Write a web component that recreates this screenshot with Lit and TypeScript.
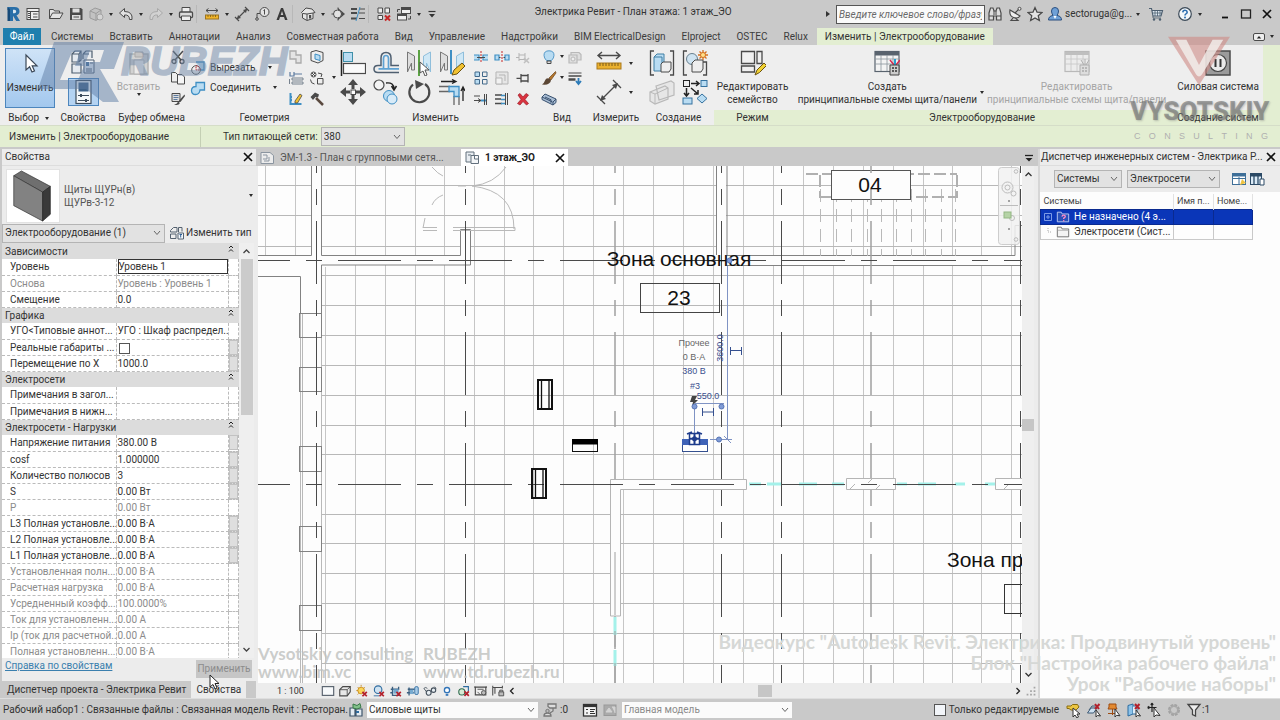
import { LitElement, html, svg, css, nothing, type TemplateResult } from "lit";
import { customElement } from "lit/decorators.js";
import { classMap } from "lit/directives/class-map.js";

/* ---------- icon set: small glyphs on a 16 grid, large ones on a 26 grid ---------- */

const K = "#4a4a4a";
const B = "#3f8fc4";
const L = "#b9dcf2";

const small: Record<string, TemplateResult> = {
  revit: svg`<path d="M2.500 1h7q5 0 5 4.300 0 3-3 4l3.500 5.700h-3.800l-3.200-5.300v5.300H4.500V4H2.500z" fill="#2a6fa8"/><path d="M8 3.700v3.600h1.500q1.700 0 1.700-1.800T9.500 3.700z" fill="#d8e6f0"/><path d="M2.500 1L5 3v12H2.500z" fill="#174a78"/>`,
  home: svg`<rect x="2" y="2.500" width="12" height="11" fill="#eee" stroke="${K}"/><path d="M2 5.500h12M5.500 5.500v8M8 8h4.500M8 11h4.500" stroke="${K}" fill="none"/><path d="M3 7.500h2M3 9.500h2M3 11.500h2" stroke="${K}"/>`,
  open: svg`<path d="M1.500 12.500v-9h4l1 1.500h5v2M1.500 12.500l3-5.500h10.500l-3 5.500z" fill="#e4e4e4" stroke="${K}"/>`,
  save: svg`<path d="M2 2h11l1.500 1.500V14H2z" fill="${K}"/><path d="M4.500 2.500h7v4h-7z" fill="#ddd"/><path d="M4 9h8.500v4.500H4z" fill="#ddd"/><path d="M5.500 11h5.500" stroke="${K}"/>`,
  sync: svg`<path d="M2 5l5-3 6 2v7l-5 3.500-6-2.500z" fill="#c2c2c2" stroke="#9b9b9b"/><path d="M2 5l6 2.500 5-3.500M8 7.500V14" stroke="#9b9b9b" fill="none"/><circle cx="12" cy="11" r="3" fill="#d5d5d5" stroke="#a5a5a5"/>`,
  undo: svg`<path d="M6.500 2.500L1.500 7l5 4.500V9q5-.5 5 4.500h2.500Q15 5.500 6.500 5.500z" fill="#e2e2e2" stroke="${K}"/>`,
  redo: svg`<path d="M9.500 2.500l5 4.500-5 4.500V9q-5-.5-5 4.500H2Q1 5.500 9.500 5.500z" fill="#d2d2d2" stroke="#a9a9a9"/>`,
  print: svg`<path d="M4 6V1.500h8V6" fill="#eee" stroke="${K}"/><rect x="1.500" y="6" width="13" height="5.500" rx="1" fill="#dcdcdc" stroke="${K}" stroke-width="1.300"/><path d="M3.500 10h9v4.500h-9z" fill="#eee" stroke="${K}"/>`,
  measureH: svg`<path d="M2 4.500h12M4.500 2.500L2 4.500l2.500 2M11.500 2.500l2.500 2-2.500 2" stroke="${K}" fill="none"/><rect x="1.500" y="9" width="13" height="4" fill="#f0b429" stroke="#9c7420"/><path d="M4 9v2M6.500 9v2M9 9v2M11.500 9v2" stroke="#7a5a14" stroke-width=".8"/>`,
  dim: svg`<path d="M3 13L13 3M1 11l4 4M11 1l4 4" stroke="${K}" fill="none" stroke-width="1.200"/><path d="M3 13l1-4 3 3zM13 3l-1 4-3-3z" fill="${K}"/>`,
  tag: svg`<circle cx="10.500" cy="6" r="4.500" fill="#e4e4e4" stroke="${K}"/><path d="M9.500 4.500l1-1V8.500M3 12V7.500h3" stroke="${K}" fill="none"/><circle cx="3" cy="13" r="1.300" fill="none" stroke="${K}"/>`,
  letterA: svg`<path d="M2.500 14L7 2h2l4.500 12h-2.500l-1-3H6l-1 3zM6.700 9h2.600L8 5z" fill="#3a3a3a" fill-rule="evenodd"/>`,
  house3d: svg`<path d="M1.500 6.500L6 2l6 1 3 3.500-2 .5v5.500l-6 2-4.500-2.500V7.500z" fill="#e6e6e6" stroke="${K}"/><path d="M7 8v6M3 7.500L7 8l6-1" stroke="${K}" fill="none"/><rect x="9" y="9" width="2.200" height="3.500" fill="${K}"/>`,
  section: svg`<path d="M8 1.500V3M8 13v1.500M1.500 8H4" stroke="${K}"/><path d="M8 2l7 6-7 6z" fill="${K}"/><circle cx="7.500" cy="8" r="4" fill="#e2e2e2" stroke="${K}"/>`,
  thin: svg`<path d="M1 3h6M1 7h6M1 12.500h6" stroke="${K}" stroke-width="2"/><path d="M9 3h6M9 7h6M9 12.500h6" stroke="${K}"/><path d="M10 1L6 15" stroke="${B}"/>`,
  closeHidden: svg`<path d="M2 2h4.500v5H2zM9 2h4.500v5H9zM2 9.500h4.500v4H2z" fill="#eee" stroke="${K}"/><path d="M9 9.500l5 5M14 9.500l-5 5" stroke="#c62828" stroke-width="2"/>`,
  switchWin: svg`<rect x="5.500" y="1.500" width="9" height="6" fill="#eee" stroke="${K}"/><path d="M5 3h10" stroke="${K}" stroke-width="2"/><rect x="1.500" y="8" width="9" height="6" fill="#eee" stroke="${K}"/><path d="M1 9h10" stroke="${K}" stroke-width="2"/><path d="M1.500 6V3.500H4M14.500 10v3H12" stroke="${K}" fill="none"/>`,
  customize: svg`<path d="M4.500 5.500h7" stroke="#333" stroke-width="1.200"/><path d="M5 8h6l-3 3.500z" fill="#333"/>`,
  binoc: svg`<path d="M2 7l1.500-5h2.500l1 3h2l1-3h2.500L14 7v7H9.500v-4h-3v4H2z" fill="#dedede" stroke="${K}" stroke-width="1.200"/><path d="M2 10h4.500M9.500 10H14M7 5v4M9 5v4" stroke="${K}"/>`,
  dish: svg`<path d="M3 4q-1 6 3.500 7.500T13 10z" fill="#eee" stroke="${K}" stroke-width="1.200"/><path d="M8 7l4-4M6 12l-2 2.500h7L8.500 12" stroke="${K}" fill="none" stroke-width="1.200"/><circle cx="12.500" cy="2.800" r="1.500" fill="#eee" stroke="${K}"/>`,
  star: svg`<path d="M8 1.500l2 4.600 5 .4-3.800 3.200 1.200 4.800L8 12l-4.400 2.500 1.200-4.800L1 6.500l5-.4z" fill="#e4e4e4" stroke="${K}" stroke-width="1.200"/>`,
  person: svg`<path d="M1.500 14q0-4 4.500-4.500Q4.500 7 4.500 5 4.500 1.500 8 1.500T11.500 5q0 2-1.500 4.500 4.500.5 4.500 4.500z" fill="#6fa0d6" stroke="#2b4f80"/><path d="M6.500 10L8 13l1.500-3" fill="#fff"/>`,
  cart: svg`<path d="M1 2.500h2.500L5 10h8l1.500-5.500H4.500" fill="#dfe9f2" stroke="#4d5f70" stroke-width="1.200"/><path d="M5 10v2h8M7 5v5M9.500 5v5M12 5v5M4.500 7h9" stroke="#4d5f70" fill="none" stroke-width=".8"/><circle cx="6" cy="13.500" r="1.200" fill="#4d5f70"/><circle cx="12" cy="13.500" r="1.200" fill="#4d5f70"/>`,
  help: svg`<circle cx="8" cy="8" r="6.300" fill="#f3f7fa" stroke="#3c4a58" stroke-width="1.200"/><path d="M5.800 6.300Q6 4.300 8 4.300t2.200 1.800q0 1.200-1.200 1.800-1 .5-1 1.600" fill="none" stroke="#2f6fb0" stroke-width="1.600"/><circle cx="8" cy="11.500" r="1" fill="#2f6fb0"/>`,
  min: svg`<path d="M5 11.500h6" stroke="#111" stroke-width="1.800"/>`,
  max: svg`<rect x="3.500" y="4" width="9" height="8" fill="none" stroke="#222" stroke-width="1.300"/>`,
  close: svg`<path d="M4 4l8 8M12 4l-8 8" stroke="#111" stroke-width="1.700"/>`,
  panelToggle: svg`<rect x="2.500" y="4.500" width="11" height="7" rx="1.500" fill="#eee" stroke="${K}"/><path d="M5.800 9.500L8 7l2.200 2.500z" fill="#222"/>`,
  cut: svg`<path d="M3 2l8 9M13 2L5 11" stroke="${K}" stroke-width="1.500"/><circle cx="4" cy="12.500" r="2" fill="none" stroke="${K}" stroke-width="1.300"/><circle cx="12" cy="12.500" r="2" fill="none" stroke="${K}" stroke-width="1.300"/>`,
  copy: svg`<path d="M1.500 2.500h4L8 5v7H1.500z" fill="#eee" stroke="${K}"/><path d="M7.500 4.500H12l2.500 2.500v7h-7z" fill="#f6f6f6" stroke="${K}"/>`,
  match: svg`<path d="M2 2.500h8v8H2z" fill="#ddd" stroke="${K}"/><path d="M3.500 4.500h5M3.500 6.500h5M3.500 8.500h4" stroke="#5c7ba0"/><path d="M14.500 3.500L9 9.500l1.500 1.500 4.500-6z" fill="${K}"/><path d="M4 13.500q3 0 4-3l2 1.500q-1.500 3-6 1.500z" fill="${K}"/>`,
  geoCut: svg`<path d="M6 2h8v8H9" fill="${L}" stroke="${B}" stroke-width="1.300"/><circle cx="6" cy="10" r="4.300" fill="#eee" stroke="#555"/><path d="M6 5.700A4.300 4.300 0 0 1 10.300 10H6z" fill="none" stroke="#c62828" stroke-dasharray="1.500 1"/>`,
  geoJoin: svg`<path d="M6 2.500h8.500V10H10q-.5 4.500-4.500 4.500-4 0-4-4t4.500-4z" fill="${L}" stroke="${B}" stroke-width="1.300"/>`,
  cope: svg`<path d="M2 2h6v4h5v8H8v-4H2z" fill="#e4e4e4" stroke="#a9a9a9" stroke-width="1.300"/>`,
  notch: svg`<path d="M2 2v4h4V2M9 4h5M6 4h3" stroke="#5c7ba0" fill="none" stroke-width="1.200"/><path d="M4 8h11v2H4zM4 12h11v2H4zM1.500 9v5" stroke="#77828e" fill="none"/>`,
  paintEdge: svg`<path d="M2.500 2v11h11M2 6h2M2 9h2" stroke="${B}" fill="none" stroke-width="2"/><path d="M7 10l5-7 2 1.500L9.500 12H7z" fill="#f0c030" stroke="${K}" stroke-width=".8"/>`,
  split: svg`<path d="M2 3l5-1.500 7 2v8L9 14l-7-2.500z" fill="#eee" stroke="${K}"/><path d="M6 5l5 1.500v5L6 10z" fill="${L}" stroke="${B}"/>`,
  wallJoin: svg`<circle cx="4.500" cy="4.500" r="2.500" fill="#eee" stroke="${K}"/><path d="M3 3l3 3M6 3L3 6M9 3l4 1-1 3" fill="none" stroke="${K}"/><path d="M8.500 8.500H14V14H8.500zM1.500 9.500q0 4 4 4.500" fill="#eee" stroke="${K}"/>`,
  hammer: svg`<path d="M1.500 6L6 1.500l4 2-1 3-2.500-.5L4 9z" fill="${K}"/><path d="M7 7l7 7" stroke="#5a4a40" stroke-width="2.500"/>`,
  splitEl: svg`<path d="M1 6h5v5H1M15 6h-5v5h5" fill="${L}" stroke="${B}" stroke-width="1.200"/><path d="M8 2v12" stroke="#c62828" stroke-dasharray="2 1"/><path d="M4 8.500h8" stroke="${K}"/>`,
  splitGap: svg`<path d="M1 6h4v5H1zM11 6h4v5h-4z" fill="${L}" stroke="${B}" stroke-width="1.200"/><path d="M8 2v12" stroke="#c62828" stroke-dasharray="2 1"/><path d="M5 8.500h1.500M9.500 8.500H11" stroke="${K}"/>`,
  unpin: svg`<path d="M4 4v8M4 6h6M4 10.500h6M10 4v8M1 8.500h3" fill="none" stroke="#b5b5b5"/><path d="M9 9l5 5M14 9l-5 5" stroke="#c0c0c0" stroke-width="1.500"/>`,
  array: svg`<path d="M2 2h4.500v4.500H2zM2 9.500h4.500V14H2z" fill="${L}" stroke="#41688a"/><path d="M9.500 2H14v4.500H9.500zM9.500 9.500H14V14H9.500z" fill="#eee" stroke="#41688a"/>`,
  scale: svg`<path d="M2 2h12v12H2z" fill="#e6e6e6" stroke="#b5b5b5"/><path d="M2 8h6v6H2z" fill="#f2f2f2" stroke="#b5b5b5"/><path d="M5 5h6v6" stroke="#b5b5b5" fill="none"/>`,
  pin: svg`<path d="M6 4v8.500M6 5.500h7M6 11h7M13 4v8.500M1.500 8.300H6" fill="none" stroke="${K}" stroke-width="1.300"/>`,
  trimOne: svg`<path d="M1 5h6M1 9.500h7M5 7.500l3 2-3 2" stroke="${K}" fill="none"/><path d="M8 9.500h5" stroke="${B}" stroke-width="2"/><path d="M11.500 3v11M13.500 3v11" stroke="${K}"/>`,
  trimMulti: svg`<path d="M1 4h7M1 8h6M1 12.500h7" stroke="${K}" stroke-width="1.400"/><path d="M7 4.500h5M7 8.500h5M7 12.500h5" stroke="${B}" stroke-width="1.500"/><path d="M11.500 2v12M13.500 2v12" stroke="${K}"/>`,
  del: svg`<path d="M3 4l2-1.500L8 6l3-3.500L13.500 4 10 8.500l3.500 4L11.500 14 8 10.500 5 14l-2.500-1.500L6 8.500z" fill="#d9333f" stroke="#9d1c28" stroke-width=".7"/>`,
  bulb: svg`<path d="M5.500 11.500Q3 9 3 6.300 3 1.800 8 1.800t5 4.500q0 2.700-2.500 5.200z" fill="${L}" stroke="#5599c8"/><path d="M6 12h4v2.500H6z" fill="#ddd" stroke="${K}"/>`,
  paint: svg`<path d="M14.500 1.500L8 8l2 2 5-7z" fill="#b5762c" stroke="#6d451b" stroke-width=".7"/><path d="M1 14.500q2-1 3-4T8.500 8.500L10 10.500q-1 5-9 4z" fill="#5b4634"/>`,
  chain: svg`<path d="M1 6l3-3 11 5v3.500l-3 2.500L1 8.500z" fill="#a9bdd4" stroke="#38506e"/><path d="M4 6l6 2.800v3M1 6l10.500 5M12 14v-3l3-3" stroke="#38506e" fill="none"/>`,
  ghostBox: svg`<path d="M2 6h8v8H2zM4 6V3.500h8l2 2V11h-4" fill="#dedede" stroke="#b9b9b9" stroke-width="1.200"/><circle cx="6" cy="10" r="2" fill="#eee" stroke="#b9b9b9"/>`,
  lineStyle: svg`<path d="M1.500 3h13" stroke="${K}"/><path d="M1.500 6h13" stroke="${K}" stroke-width="1.500"/><path d="M1.500 9.500h7" stroke="${K}" stroke-width="2.500"/><path d="M11.500 8v5M9 11l2.500 3L14 11" stroke="#2d7bb8" stroke-width="1.800" fill="none"/>`,
  typeEdit: svg`<path d="M4.500 2.500H8v4.500H1.500V5.500l3-3M9.500 2.500H13v4M9.500 2.500V7M1.500 9H7v4.500H1.500z" fill="#eee" stroke="#556270"/><path d="M9 8h5.500v6H9z" fill="#f5f8fb" stroke="#556270"/><path d="M10.500 9.500h2.500M11.700 9.500v3" stroke="#2f5f95"/>`,
  sheet: svg`<path d="M2 2.500h9l3.500 3V13.500H2z" fill="#ececec" stroke="#8b95a0"/><path d="M4 5h4v4H4M10 7v4H5" fill="none" stroke="#8b95a0"/>`,
  plan: svg`<path d="M2 2h8v10H2z" fill="#e8edf2" stroke="#63707d"/><path d="M7 5.500h7.500v8H7zM4 5h3M10.500 5.500V9H14" fill="#f4f6f8" stroke="#63707d"/>`,
  folder: svg`<path d="M1.500 13.500v-11h4.500l1 2h7.500v9z" fill="#f4f4f4" stroke="#666"/><path d="M2 6h12.500" stroke="#aaa"/>`,
  folderQ: svg`<path d="M1.500 13.500v-11h4.500l1 2h7.500v9z" fill="#2a50b8" stroke="#c7d4f5"/><path d="M6.800 7.500q.3-1.700 2-1.700t1.800 1.500q0 1-1.800 2v1" stroke="#ff8ac6" fill="none" stroke-width="1.500"/><circle cx="8.800" cy="12.300" r=".9" fill="#ff8ac6"/>`,
  colFit: svg`<rect x="1.500" y="2.500" width="13" height="11" fill="#fff" stroke="#3e6f98"/><path d="M2 4h12" stroke="#3e6f98" stroke-width="3"/><path d="M2 7.500h12M8 6v8" stroke="#3e6f98"/><path d="M9 14l2-6 4 4z" fill="#efc341"/>`,
  cols: svg`<rect x="1.500" y="2.500" width="11" height="11" fill="#dcecf8" stroke="#2c4a66"/><path d="M2 4h11" stroke="#2c4a66" stroke-width="3"/><path d="M5 3v11M9 3v11" stroke="#2c4a66" stroke-width="1.300"/><path d="M11 8h4v6h-4z" fill="#fff" stroke="#2c4a66"/>`,
  detail: svg`<rect x="1.500" y="3" width="13" height="10" fill="#f7f9fb" stroke="#555f6b" stroke-width="1.300"/>`,
  style: svg`<path d="M2 6.500L5.500 3H14v6l-3.500 4.500H2z" fill="#e8e8e8" stroke="${K}" stroke-width="1.300"/><path d="M2 6.500h8.500v7M10.500 6.500L14 3" fill="none" stroke="${K}"/>`,
  sun: svg`<circle cx="7" cy="7.500" r="3.800" fill="#fbd65a" stroke="#c98a1b"/><path d="M7 1v2M1.500 7.500h2M3 3.500l1.300 1.300M3 12l1.300-1.300M11 3.500L10 5" stroke="#c98a1b"/><path d="M8.500 9l5 5M13.500 9l-5 5" stroke="#b3202c" stroke-width="2"/>`,
  shadow: svg`<circle cx="7" cy="6.500" r="4.300" fill="#cfe3f2" stroke="#2f6ca0" stroke-width="1.300"/><path d="M2 13.500h6" stroke="#2f6ca0"/><path d="M8.500 9l5 5M13.500 9l-5 5" stroke="#b3202c" stroke-width="2"/>`,
  crop: svg`<path d="M2 6h9V3M4 3v10h8M1.500 10h3" stroke="#3b5f80" fill="none" stroke-width="1.500"/><rect x="5" y="6" width="6" height="5" fill="#76aad0"/><path d="M8.500 9l5 5M13.500 9l-5 5" stroke="#b3202c" stroke-width="2"/>`,
  cropShow: svg`<path d="M2 6h8M3.500 4v9M1 10h8" stroke="#3b5f80" fill="none" stroke-width="1.500"/><rect x="4.500" y="6.500" width="4" height="5" fill="#76aad0"/><rect x="10" y="3" width="4" height="9" rx="1.500" fill="#a9cde8" stroke="#2f6ca0"/>`,
  glasses: svg`<path d="M1 5q2-2 4 0M13 3l2 2" stroke="#46525e" fill="none"/><circle cx="6.500" cy="10" r="2.800" fill="#e8eef3" stroke="#46525e" stroke-width="1.300"/><circle cx="12" cy="7" r="2.500" fill="#e8eef3" stroke="#46525e" stroke-width="1.300"/><path d="M1 5l3 4" stroke="#46525e"/>`,
  reveal: svg`<circle cx="8" cy="7" r="3" fill="#fff" stroke="#3274b8" stroke-width="1.500"/><path d="M6.500 11.500h3v2h-3z" fill="#3274b8"/>`,
  temp: svg`<circle cx="5.500" cy="9" r="3.500" fill="#d6ead5" stroke="#2d6a4d" stroke-width="1.200"/><path d="M7 3h6v5" fill="none" stroke="#2d6ca0" stroke-width="1.300"/><path d="M8.500 8.500l5 5M13.500 8.500l-5 5" stroke="#b3202c" stroke-width="2"/>`,
  analyt: svg`<path d="M1.500 3.500h12v9h-12zM1 2.500v2M14 2.500v2" fill="#eee" stroke="${K}" stroke-width="1.300"/><path d="M4 6h7M4 9l3 3" stroke="${K}"/><circle cx="11" cy="10" r="2.500" fill="#bbb" stroke="${K}"/>`,
  lockDim: svg`<path d="M2 2v11M2 4h11M13 2v3M4.500 4v7" fill="none" stroke="${K}" stroke-width="1.200"/><path d="M9 9h5.500v4.500H9zM10 9V7h3.500v2" fill="#bbb" stroke="${K}"/>`,
  worksets: svg`<path d="M2 6h5v8H2zM8 7h6v7H8z" fill="#e4ebf1" stroke="#3e556b" stroke-width="1.200"/><path d="M5 2l4 1.500 3-2 1 4-4 1.500-4-1z" fill="#82c08a" stroke="#3a7a48"/><path d="M8 10h3" stroke="#2f6ca0" stroke-width="2"/>`,
  editReq: svg`<path d="M6 2h8v4H8L6 4.500zM11 6v3l-3 2M2 14q0-3 3.500-3T9 14z" fill="#ddd" stroke="#777" stroke-width="1.300"/><circle cx="5.500" cy="9" r="1.700" fill="#bbb" stroke="#777"/>`,
  listWin: svg`<rect x="1.500" y="2.500" width="13" height="11.500" fill="#f4f4f4" stroke="#333" stroke-width="1.300"/><path d="M1.500 4h13" stroke="#333" stroke-width="2.200"/><path d="M4 7.500h2M4 11h2M8 7.500h5M8 9.500h4M8 11.500h5" stroke="#333"/>`,
  ghostWin: svg`<rect x="2" y="3" width="12" height="10.500" fill="#aaa" stroke="#999"/><path d="M4 10l3-4 3 4zM10 5h3v6" fill="#d3d3d3" stroke="#d3d3d3"/>`,
  selLink: svg`<path d="M1 4h4l1.500-1.500h5L13 5l-3 3H5L3 6.500H1z" fill="#ebc541" stroke="#8a6d11"/><path d="M7 6v9l2-2 2 3 1.500-1L11 12h3z" fill="#fff" stroke="#333"/>`,
  selUnder: svg`<path d="M1.500 11L5 6h6l-3.500 5z" fill="#cfe2f1" stroke="#3c5a76"/><path d="M3 8l3-4h5" fill="none" stroke="#3c5a76"/><path d="M9 2l4 5M13.500 2L9 7" stroke="#b3202c" stroke-width="2"/><path d="M10 8v7l1.500-1.500 3 .5z" fill="#fff" stroke="#333"/>`,
  selPin: svg`<path d="M3 2h7v3l1 2H2l1-2zM6.500 7v6M2 11.500h8" fill="#e38a31" stroke="#9d4c13"/><path d="M9 7v8l1.700-1.700 3.300.5z" fill="#fff" stroke="#333"/>`,
  selFace: svg`<path d="M2 3.500L7 2v10l-5 2z" fill="#8cc3ea" stroke="#2d6ca0"/><path d="M7 4h4v8H7" fill="#e0eef8" stroke="#2d6ca0"/><path d="M9 2l4.500 5M13.500 2L9 7" stroke="#b3202c" stroke-width="2"/><path d="M10 8v7l1.500-1.500 3 .5z" fill="#fff" stroke="#333"/>`,
  selDrag: svg`<path d="M6 1v9M1.500 5.500h9M6 1L4.800 2.800M6 1l1.200 1.800M1.500 5.500l1.800-1.200M1.500 5.500l1.800 1.200" stroke="#222" fill="none" stroke-width="1.200"/><path d="M8 6v9l2-2 4 .5z" fill="#fff" stroke="#333"/>`,
  gear: svg`<circle cx="8" cy="8" r="4.500" fill="none" stroke="#a2a2a2" stroke-width="3" stroke-dasharray="2.500 1"/><circle cx="8" cy="8" r="4" fill="none" stroke="#a8a8a8" stroke-width="1.500"/>`,
  filter: svg`<path d="M2 2.500h12L9.500 8v6l-3-1.500V8z" fill="#eee" stroke="#444" stroke-width="1.300"/>`,
  grip: svg`<path d="M11 3h2v2h-2zM11 7h2v2h-2zM11 11h2v2h-2zM7 7h2v2H7zM7 11h2v2H7zM3 11h2v2H3z" fill="#a5a5a5"/>`,
};

const large: Record<string, TemplateResult> = {
  cursor: svg`<path d="M9 4v15l3.600-3.200L15 21l2.500-1-2.300-5.200H20z" fill="#fff" stroke="#3b4858" stroke-width="1.200"/>`,
  typeProps: svg`<path d="M2 5l3-3h6v9l-2 2H2zM13 5l3-3h6v7M2 5h7v8M13 5h6M13 5v5M2 15h9v9H2zM9 5l2-3" fill="#e5eaf0" stroke="#4f5f70" stroke-width="1.200"/><path d="M14 11h10v13H14z" fill="#eef3f8" stroke="#4f5f70"/><path d="M16 13h3v4h-3z" fill="#49739e"/><path d="M16 20h6M20 14h3M16 22h6" stroke="#4f5f70"/>`,
  props: svg`<rect x="6" y="1.500" width="15" height="23" fill="#f5f8fa" stroke="#3d4c5c" stroke-width="1.200"/><rect x="8.500" y="3.500" width="10" height="9" fill="#3f6288"/><path d="M8 16.500h11M8 21.500h11" stroke="#3d4c5c"/><path d="M11 15v3M16 20v3" stroke="#3d4c5c" stroke-width="2"/>`,
  paste: svg`<path d="M4 4h18v20H4z" fill="#d2d2d2" stroke="#b3b3b3" stroke-width="1.500"/><path d="M9 2h8v5H9z" fill="#c4c4c4" stroke="#aaa"/><path d="M8 10h10v14H8z" fill="#ececec" stroke="#b3b3b3"/>`,
  align: svg`<path d="M1.500 0v26" stroke="#222" stroke-width="1.500"/><rect x="3.500" y="2.500" width="9" height="9" fill="${L}" stroke="#3f8fa8"/><rect x="3.500" y="13.500" width="22" height="10" fill="#fafafa" stroke="${K}" stroke-width="1.200"/>`,
  offset: svg`<path d="M26 22.500H5q-4 0-4-3.500t4-3.500h3V8q0-5.500 5-5.500T18 8v7.500h8" fill="none" stroke="#4f5f70" stroke-width="1.500"/><path d="M26 18.800H5.500M10.500 18.500V8.500q0-3 2.500-3t2.500 3v10" fill="none" stroke="#5ea2d3" stroke-width="1.700"/>`,
  mirrorPick: svg`<path d="M1.500 2l7 4v14h-3v-7l-4 9z" fill="#dedede" stroke="#777"/><path d="M24.500 2l-7 4v14h3v-7l4 9z" fill="#cfe8f6" stroke="#8fbedb"/><path d="M13 0v26" stroke="#5ba243" stroke-width="2"/><path d="M14 12v11l3-2 2 5 2-1-2-5h4z" fill="#fff" stroke="#555"/>`,
  mirrorDraw: svg`<path d="M1.500 2l7 4v14h-3v-7l-4 9z" fill="#dedede" stroke="#777"/><path d="M24.500 2l-7 4v14l7-4z" fill="#cfe8f6" stroke="#8fbedb"/><path d="M12 0v24" stroke="${B}" stroke-width="2"/><path d="M13 25l2-5 8-7 3 3-8 8z" fill="#f1c232" stroke="#6b5210"/>`,
  move: svg`<path d="M13 0l5 6h-3.500v4h-3V6H8zM13 26l5-6h-3.500v-4h-3v4H8zM0 13l6-5v3.500h4v3H6V18zM26 13l-6-5v3.500h-4v3h4V18z" fill="${K}"/><rect x="11" y="11" width="4.500" height="4.500" fill="#fff" stroke="${K}"/>`,
  copyEl: svg`<circle cx="6" cy="6" r="5" fill="#f4f4f4" stroke="${K}" stroke-width="1.200"/><path d="M13 4q8-1 8 6M18.500 7l2.500 4 2.500-4" fill="none" stroke="#222" stroke-width="1.500"/><circle cx="16" cy="17" r="5.500" fill="${L}" stroke="${B}"/><circle cx="19" cy="20" r="5" fill="#d8ebf8" stroke="${B}"/>`,
  rotate: svg`<path d="M7 5.500A10 10 0 1 0 19 5" fill="none" stroke="${K}" stroke-width="2.200"/><path d="M9 1l9 4-8 5z" fill="${K}"/>`,
  trimCorner: svg`<path d="M2 2.500h14M13 .5l4 2-4 2" stroke="#222" fill="none" stroke-width="1.300"/><path d="M0 7.500h11M0 12.500h11M15 17v9M20 17v9" stroke="#666" stroke-width="1.300"/><path d="M10 7.500h10v10h-5v-5h-5z" fill="${L}" stroke="${B}" stroke-width="1.300"/><path d="M24 22V9M22 12l2-4 2 4" stroke="#222" fill="none" stroke-width="1.300"/>`,
  measureRule: svg`<path d="M2 5.500h22M6 2L2 5.500 6 9M20 2l4 3.500L20 9" stroke="${K}" fill="none" stroke-width="1.400"/><rect x="1" y="13" width="24" height="6" fill="#eab02e" stroke="#a9781b"/><path d="M4 13v3M7 13v3M10 13v3M13 13v3M16 13v3M19 13v3M22 13v3" stroke="#7b5a18"/>`,
  measureDim: svg`<path d="M5 21L21 5M1 17l8 8M17 1l8 8" stroke="${K}" fill="none" stroke-width="1.300"/><path d="M4 22l2-6 4 4zM22 4l-2 6-4-4z" fill="${K}"/>`,
  group: svg`<path d="M5 1H1.500v24H5M21 1h3.500v24H21" fill="none" stroke="${K}" stroke-width="1.300"/><path d="M5 7l3-3h7v9l-2 2h7l-2 6H5z" fill="${L}" stroke="#3f7fa4"/><path d="M5 7h8v8" fill="none" stroke="#3f7fa4"/><path d="M12 14l2-2h8v7l-2 3h-8z" fill="#eee" stroke="${K}"/>`,
  similar: svg`<path d="M5 1H1.500v24H5M21 12h3.500v13H21" fill="none" stroke="${K}" stroke-width="1.300"/><circle cx="10" cy="9" r="5.500" fill="#cfe4f2" stroke="#69808f"/><path d="M10 13l3-3h8v9l-2 3h-9z" fill="#eee" stroke="${K}"/><path d="M21 0v10M16 5h10M17.500 1.500l7 7M24.500 1.500l-7 7" stroke="#d5711f" stroke-width="1.300"/><circle cx="21" cy="5" r="2.500" fill="#ffe08a" stroke="#d5711f"/>`,
  assembly: svg`<path d="M7 7l15-5 3 2v12l-15 5zM1 13l15-6 3 2v11L6 25l-5-3z" fill="#e6e6e6" stroke="#b9b9b9" stroke-width="1.200"/><path d="M6 15v10M1 13l5 2 13-6" fill="none" stroke="#b9b9b9"/>`,
  parts: svg`<rect x="1.500" y="1.500" width="6" height="6" fill="#eee" stroke="#222"/><rect x="19" y="1.500" width="6" height="6" fill="${L}" stroke="#3472a0"/><path d="M9 4.500h7M14 2l3 2.500L14 7M4.500 9v7M2 14l2.500 3L7 14M9 9l7 6M12 15h4v-4" fill="none" stroke="#222" stroke-width="1.500"/><rect x="1" y="19" width="9" height="6" fill="${L}" stroke="#3472a0"/><path d="M20 15l5 4.500-5 4.500-5-4.500z" fill="${L}" stroke="#3472a0"/>`,
  editFamily: svg`<path d="M1.500 1.500h13v12h-13zM17 1.500h5v12h-5zM1.500 16h13v6h-13z" fill="#f0f0f0" stroke="${K}" stroke-width="1.300"/><path d="M15 25l2-5 7-7 2.500 2.500-7 7z" fill="#f1d232" stroke="#6b5210"/>`,
  panelSchedule: svg`<rect x="1" y="1.500" width="24" height="20" fill="#f4f4f4" stroke="#59636e" stroke-width="1.200"/><path d="M1 3.500h24" stroke="#59636e" stroke-width="4"/><path d="M1 9h24M1 14h24M7 5v16M13 5v16M19 5v16" stroke="#8b949c" stroke-width=".8"/><path d="M16 10l4 5M26 10l-4 5" stroke="#d42a50" stroke-width="1.500"/><path d="M21 9v6" stroke="#27a0d0" stroke-width="2"/><path d="M16 15h9v10h-9z" fill="#ccc" stroke="#444"/><path d="M18 18h2M21 18h2M18 21h2M21 21h2" stroke="#333" stroke-width="1.500"/>`,
  panelGhost: svg`<rect x="1" y="1.500" width="24" height="20" fill="#ececec" stroke="#b9b9b9" stroke-width="1.200"/><path d="M1 3.500h24" stroke="#bfbfbf" stroke-width="3"/><path d="M1 9h24M1 14h24M7 5v16M13 5v16M19 5v16" stroke="#c6c6c6" stroke-width=".8"/><path d="M16 15h9v10h-9zM21 9v6M17 10l3 5M25 10l-3 5" fill="#ddd" stroke="#b0b0b0"/><path d="M18 18h2M21 18h2M18 21h2M21 21h2" stroke="#aaa" stroke-width="1.500"/>`,
  power: svg`<rect x="1" y="1" width="24" height="24" fill="#9b9b9b" stroke="#4b4b4b" stroke-width="1.500"/><circle cx="13" cy="13" r="8.500" fill="#e9e9e9" stroke="#444" stroke-width="1.200"/><path d="M10.500 9v8M15.500 9v8" stroke="#333" stroke-width="2"/>`,
};

const sm = (n: string) => html`<svg class="i16" viewBox="0 0 16 16" aria-hidden="true">${small[n]}</svg>`;
const lg = (n: string) => html`<svg class="i26" viewBox="0 0 26 26" aria-hidden="true">${large[n]}</svg>`;

const shared = css`
  :host { font-family: Roboto, "Open Sans", sans-serif; font-size: 10px; line-height: 14px; color: #333; }
  * { box-sizing: border-box; }
  button, select, input { font: inherit; color: inherit; margin: 0; }
  button { border: 0; padding: 0; background: none; display: inline-flex; align-items: center; justify-content: center; white-space: nowrap; }
  .i16 { width: 16px; height: 16px; display: block; flex: none; }
  .i26 { width: 26px; height: 26px; display: block; flex: none; }
  .arrow { width: 10px; flex: none; display: inline-flex; justify-content: center; vertical-align: middle; }
  .arrow::before { content: ""; border: 2px solid transparent; border-top: 3px solid #2c2c2c; border-bottom: 0; }
  select {
    appearance: none; border: 1px solid #b4b4b4; border-radius: 0; padding: 0 14px 0 2px; min-width: 0;
    background: #e2e2e2 url("data:image/svg+xml,%3Csvg xmlns='http://www.w3.org/2000/svg' width='8' height='6'%3E%3Cpath d='M1 1l3 3.500L7 1' fill='none' stroke='%23666'/%3E%3C/svg%3E") no-repeat right 3px center;
  }
`;

const arrow = html`<span class="arrow"></span>`;

/* ---------- title bar with the quick access tools ---------- */

@customElement("title-bar")
class TitleBar extends LitElement {
  static styles = [shared, css`
    :host { display: flex; align-items: center; height: 28px; padding: 0 3px; background: #c9c9c9; }
    .tools { display: flex; align-items: center; }
    .tool { width: 20px; height: 20px; }
    .sep { width: 6px; height: 18px; border-left: 1px solid #b8b8b8; }
    .gap { width: 3px; }
    .title { flex: 1; text-align: center; font-size: 10px; margin: 0; font-weight: 400; padding-bottom: 4px; white-space: nowrap; overflow: hidden; }
    .play { border: 3px solid transparent; border-left: 4px solid #333; border-right: 0; margin-right: 6px; }
    .search { width: 149px; height: 19px; border: 1px solid #555; background: #fafafa; padding: 0 2px; font-style: italic; border-radius: 0; }
    .search::placeholder { color: #6a6a6a; opacity: 1; }
    .user { width: 68px; }
    .win { width: 21px; height: 20px; }
    .space { width: 9px; }
  `];
  private tool(n: string, label: string) {
    return html`<button class="tool" aria-label=${label}>${sm(n)}</button>`;
  }
  render() {
    const t = (n: string, l: string) => this.tool(n, l);
    return html`
      <div class="tools">
        ${t("revit", "Revit")}${t("home", "Главная")}<span class="gap"></span>
        ${t("open", "Открыть")}${t("save", "Сохранить")}${t("sync", "Синхронизация")}${arrow}
        ${t("undo", "Отменить")}${arrow}${t("redo", "Повторить")}${arrow}${t("print", "Печать")}<span class="sep"></span>
        ${t("measureH", "Измерить")}${arrow}${t("dim", "Размер")}${t("tag", "Марка")}${t("letterA", "Текст")}<span class="sep"></span>
        ${t("house3d", "3D вид")}${arrow}${t("section", "Разрез")}${t("thin", "Тонкие линии")}<span class="sep"></span>
        ${t("closeHidden", "Закрыть скрытые")}${t("switchWin", "Переключить окна")}${arrow}<button aria-label="Настройка">${sm("customize")}</button>
      </div>
      <h1 class="title">Электрика Ревит - План этажа: 1 этаж_ЭО</h1>
      <span class="play"></span>
      <input class="search" type="text" aria-label="Поиск" placeholder="Введите ключевое слово/фразу" />
      <div class="tools">
        ${t("binoc", "Найти")}${t("dish", "Центр связи")}${t("star", "Избранное")}${t("person", "Учётная запись")}
        <span class="user">sectoruga@g...</span>${arrow}
        <span class="gap"></span>${t("cart", "Магазин")}<span class="space"></span>${t("help", "Справка")}${arrow}<span class="space"></span>
        <button class="win" aria-label="Свернуть">${sm("min")}</button>
        <button class="win" aria-label="Развернуть">${sm("max")}</button>
        <button class="win" aria-label="Закрыть">${sm("close")}</button>
      </div>`;
  }
}

/* ---------- ribbon ---------- */

@customElement("ribbon-bar")
class RibbonBar extends LitElement {
  static styles = [shared, css`
    :host { display: block; background: #eee; }
    .tabs { display: flex; height: 17px; padding: 0 3px; background: #c9c9c9; }
    .tab { padding: 0 8px; height: 17px; color: #3c3c3c; }
    .tab.file { background: #1f7fae; color: #fff; width: 38px; padding: 0; margin-right: 2px; }
    .tab.ctx { background: #e3eed2; color: #333; margin-left: 1px; }
    .right { margin-left: auto; display: flex; align-items: center; }
    .panels { display: flex; height: 81px; padding-left: 4px; border-bottom: 1px solid #d5ddc8; }
    .panel { display: flex; flex-direction: column; flex: none; }
    .body { height: 65px; display: flex; align-items: center; justify-content: center; gap: 4px; }
    .label { height: 15px; line-height: 15px; text-align: center; white-space: nowrap; }
    .green .label { background: #e3eed2; }
    .tail { flex: 1; background: #e3eed2; }
    .w52 { width: 52px; } .w54 { width: 54px; } .w83 { width: 83px; } .w143 { width: 143px; } .w199 { width: 199px; }
    .w71 { width: 71px; } .w77 { width: 77px; } .w382 { width: 382px; } .w90 { width: 90px; }
    .w83 .body { gap: 10px; }
    .w199 .body { gap: 8px; }
    .w382 .body { gap: 0; }
    .big { flex-direction: column; justify-content: flex-start; height: 60px; padding-top: 2px; line-height: 13px; }
    .big .i26 { margin-bottom: 4px; }
    .picked { background: linear-gradient(#cfe3f7, #a3c8ee); border: 1px solid #4d86bd; width: 50px; }
    .stack { display: grid; gap: 3px; justify-items: center; align-content: center; }
    .stack button.on { background: #b4d3f2; border: 1px solid #4d86bd; width: 31px; }
    .big.dim { color: #a5a5a5; }
    .row { display: flex; align-items: center; }
    .geo { display: grid; gap: 4px; margin-right: 4px; }
    .geo button { gap: 4px; justify-content: flex-start; }
    .geo .arrow { margin-left: 5px; }
    .icons { display: grid; gap: 5px 5px; grid-auto-flow: column; grid-template-rows: repeat(3, 16px); }
    .bigs { display: grid; gap: 3px 7px; grid-auto-flow: column; grid-template-rows: repeat(2, 26px); }
    .drop { align-self: flex-end; padding-bottom: 16px; display: flex; }
    .options { height: 21px; background: #e3eed2; display: flex; align-items: center; }
    .ctxname { width: 201px; padding-left: 9px; border-right: 1px solid #c4cfb4; height: 20px; line-height: 20px; }
    .net { display: flex; align-items: center; gap: 3px; padding-left: 22px; }
    .net select { width: 84px; height: 19px; }
  `];
  private icon(n: string) { return html`<button aria-label=${n}>${sm(n)}</button>`; }
  private big(n: string) { return html`<button aria-label=${n}>${lg(n)}</button>`; }
  private panel(w: string, label: unknown, body: unknown, green = false) {
    return html`<section class=${classMap({ panel: true, [w]: true, green })}>
      <div class="body">${body}</div><div class="label">${label}</div></section>`;
  }
  render() {
    const i = (n: string) => this.icon(n);
    const b = (n: string) => this.big(n);
    const tabs = ["Системы", "Вставить", "Аннотации", "Анализ", "Совместная работа", "Вид", "Управление", "Надстройки", "BIM ElectricalDesign", "Elproject", "OSTEC", "Relux"];
    return html`
      <nav class="tabs">
        <button class="tab file">Файл</button>
        ${tabs.map((t) => html`<button class="tab">${t}</button>`)}
        <button class="tab ctx">Изменить | Электрооборудование</button>
        <span class="right">${i("panelToggle")}${arrow}</span>
      </nav>
      <div class="panels">
        ${this.panel("w52", html`Выбор ${arrow}`, html`<button class="big picked">${lg("cursor")}Изменить</button>`)}
        ${this.panel("w54", "Свойства", html`<div class="stack"><button aria-label="Тип">${lg("typeProps")}</button><button class="on" aria-label="Свойства">${lg("props")}</button></div>`)}
        ${this.panel("w83", "Буфер обмена", html`<button class="big dim">${lg("paste")}Вставить${arrow}</button><div class="icons">${i("cut")}${i("copy")}${i("match")}</div>`)}
        ${this.panel("w143", "Геометрия", html`<div class="geo"><button>${sm("geoCut")}Вырезать ${arrow}</button><button>${sm("geoJoin")}Соединить ${arrow}</button></div>
          <div class="icons">${["cope", "notch", "paintEdge", "split", "wallJoin", "hammer"].map(i)}</div>${arrow}`)}
        ${this.panel("w199", "Изменить", html`<div class="bigs">${["align", "move", "offset", "copyEl", "mirrorPick", "rotate", "mirrorDraw", "trimCorner"].map(b)}</div>
          <div class="icons">${["splitEl", "array", "trimOne", "splitGap", "scale", "trimMulti", "unpin", "pin", "del"].map(i)}</div>`)}
        ${this.panel("w54", "Вид", html`<div class="row"><div class="icons">${i("bulb")}${i("paint")}${i("chain")}</div>
          <div class="icons"><span class="row">${arrow}</span><span class="row">${arrow}</span></div>
          <div class="icons">${i("ghostBox")}${i("lineStyle")}</div></div>`)}
        ${this.panel("w54", "Измерить", html`<div class="bigs">${b("measureRule")}${b("measureDim")}</div><div class="bigs"><span class="row">${arrow}</span><span class="row">${arrow}</span></div>`)}
        ${this.panel("w71", "Создание", html`<div class="bigs">${["group", "assembly", "similar", "parts"].map(b)}</div>`)}
        ${this.panel("w77", "Режим", html`<button class="big">${lg("editFamily")}<span>Редактировать</span><span>семейство</span></button>`, true)}
        ${this.panel("w382", "Электрооборудование", html`
          <button class="big">${lg("panelSchedule")}<span>Создать</span><span>принципиальные схемы щита/панели</span></button><span class="drop">${arrow}</span>
          <button class="big dim">${lg("panelGhost")}<span>Редактировать</span><span>принципиальные схемы щита/панели</span></button>`, true)}
        ${this.panel("w90", "Создание систем", html`<button class="big">${lg("power")}<span>Силовая система</span></button>`, true)}
        <div class="tail"></div>
      </div>
      <div class="options">
        <span class="ctxname">Изменить | Электрооборудование</span>
        <label class="net">Тип питающей сети: <select><option>380</option></select></label>
      </div>`;
  }
}

/* ---------- properties palette ---------- */

type Row = { k: string; v?: string; head?: boolean; dim?: boolean; btn?: boolean; check?: boolean; edit?: boolean };
const ROWS: Row[] = [
  { k: "Зависимости", head: true },
  { k: "Уровень", v: "Уровень 1", edit: true },
  { k: "Основа", v: "Уровень : Уровень 1", dim: true },
  { k: "Смещение", v: "0.0" },
  { k: "Графика", head: true },
  { k: "УГО<Типовые аннот...", v: "УГО : Шкаф распредел..." },
  { k: "Реальные габариты ...", check: true, btn: true },
  { k: "Перемещение по X", v: "1000.0", btn: true },
  { k: "Электросети", head: true },
  { k: "Примечания в загол...", v: "" },
  { k: "Примечания в нижн...", v: "" },
  { k: "Электросети - Нагрузки", head: true },
  { k: "Напряжение питания", v: "380.00 В", btn: true },
  { k: "cosf", v: "1.000000", btn: true },
  { k: "Количество полюсов", v: "3", btn: true },
  { k: "S", v: "0.00 Вт", btn: true },
  { k: "P", v: "0.00 Вт", dim: true },
  { k: "L3 Полная установле...", v: "0.00 В·А", btn: true },
  { k: "L2 Полная установле...", v: "0.00 В·А", btn: true },
  { k: "L1 Полная установле...", v: "0.00 В·А", btn: true },
  { k: "Установленная полн...", v: "0.00 В·А", dim: true },
  { k: "Расчетная нагрузка", v: "0.00 В·А", dim: true },
  { k: "Усредненный коэфф...", v: "100.0000%", dim: true },
  { k: "Ток для установленн...", v: "0.00 А", dim: true },
  { k: "Ip (ток для расчетной...", v: "0.00 А", dim: true },
  { k: "Полная установленн...", v: "0.00 В·А", dim: true },
];

@customElement("properties-palette")
class PropertiesPalette extends LitElement {
  static styles = [shared, css`
    :host { display: flex; flex-direction: column; background: #c9c9c9; min-height: 0; padding: 0 0 0 2px; }
    .card { background: #ececec; flex: 1; display: flex; flex-direction: column; min-height: 0; }
    .head { display: flex; align-items: center; justify-content: space-between; height: 17px; padding: 0 0 0 3px; border-bottom: 1px solid #ddd; flex: none; }
    .family { display: flex; align-items: center; gap: 4px; height: 57px; padding: 2px 0 0 4px; line-height: 13px; color: #555; flex: none; }
    .thumb { width: 54px; height: 54px; background: #fff; border: 1px solid #e2e2e2; }
    .family p { margin: 0; flex: 1; }
    .type { display: flex; align-items: center; gap: 4px; height: 20px; flex: none; }
    .type select { width: 163px; height: 19px; }
    .type button { gap: 1px; }
    .scroll { flex: 1; min-height: 0; display: flex; overflow: hidden; }
    table { border-collapse: collapse; table-layout: fixed; width: 237px; align-self: flex-start; background: #fff; line-height: 15px; }
    .ck { width: 114px; } .cb { width: 10px; }
    td, th { height: 16px; padding: 0; border: 1px dashed #bbb; border-width: 0 1px 1px 0; overflow: hidden; white-space: nowrap; text-align: left; font-weight: 400; }
    th.k { padding-left: 8px; }
    td.v { padding-left: 1px; }
    tr.dim { color: #8b8b8b; }
    th.sec { background: #dcdcdc; border: 0; padding: 0 4px 0 3px; }
    .sec svg { float: right; width: 8px; height: 10px; }
    .cellbtn { display: block; width: 9px; height: 15px; background: #dedede; border: 1px solid #c2c2c2; }
    .edit { width: 100%; height: 15px; border: 1px solid #333; padding: 0; background: #fff; display: block; border-radius: 0; }
    input[type="checkbox"] { appearance: none; width: 11px; height: 11px; border: 1px solid #555; background: #fff; margin: 2px 0 0 1px; display: block; }
    .bar { width: 15px; display: flex; flex-direction: column; align-items: center; background: #efefef; }
    .bar svg { width: 9px; height: 16px; }
    .bar .thumbbar { width: 12px; height: 156px; background: #cbcbcb; }
    .bar .fill { flex: 1; }
    .foot { display: flex; justify-content: space-between; height: 23px; padding: 1px 4px 0 3px; flex: none; }
    .foot a { color: #3a7fae; }
    .foot button { width: 56px; height: 18px; background: #c6c6c6; color: #8c8c8c; margin-top: 1px; }
    .tabs { display: flex; height: 17px; flex: none; }
    .tabs button { padding: 0 5px; }
    .tabs .on { background: #ececec; }
  `];
  render() {
    return html`
      <div class="card">
        <div class="head">Свойства<button aria-label="Закрыть">${sm("close")}</button></div>
        <div class="family">
          <svg class="thumb" viewBox="0 0 54 54" aria-hidden="true"><path d="M7 6l8-5 30 16-8 6z" fill="#6f6f6f" stroke="#333" stroke-width=".7"/><path d="M7 6l30 17v30L7 37z" fill="#828282" stroke="#333" stroke-width=".7"/><path d="M37 23l8-6v29l-8 7z" fill="#3a3a3a" stroke="#222" stroke-width=".7"/></svg>
          <p>Щиты ЩУРн(в)<br />ЩУРв-3-12</p>${arrow}
        </div>
        <div class="type">
          <select aria-label="Категория"><option>Электрооборудование (1)</option></select>
          <button>${sm("typeEdit")}Изменить тип</button>
        </div>
        <div class="scroll">
          <table>
            <colgroup><col class="ck" /><col /><col class="cb" /></colgroup>
            <tbody>${ROWS.map((r) => r.head
              ? html`<tr><th class="sec" colspan="3">${r.k}<svg viewBox="0 0 8 10"><path d="M2 4l2-2 2 2M2 7.500l2-2 2 2" fill="none" stroke="#222"/></svg></th></tr>`
              : html`<tr class=${classMap({ dim: !!r.dim })}><th class="k" scope="row">${r.k}</th>
                  <td class="v">${r.check ? html`<input type="checkbox" aria-label=${r.k} />` : r.edit ? html`<input class="edit" aria-label=${r.k} .value=${r.v ?? ""} />` : r.v}</td>
                  <td>${r.btn ? html`<button class="cellbtn" aria-label="Связать параметр"></button>` : nothing}</td></tr>`)}
            </tbody>
          </table>
          <div class="bar">
            <svg viewBox="0 0 9 16"><path d="M1.500 10l3-3 3 3" fill="none" stroke="#444" stroke-width="1.300"/></svg>
            <span class="thumbbar"></span><span class="fill"></span>
            <svg viewBox="0 0 9 16"><path d="M1.500 6l3 3 3-3" fill="none" stroke="#444" stroke-width="1.300"/></svg>
          </div>
        </div>
        <div class="foot"><a href="#">Справка по свойствам</a><button disabled>Применить</button></div>
      </div>
      <div class="tabs"><button>Диспетчер проекта - Электрика Ревит</button><button class="on">Свойства</button></div>`;
  }
}

/* ---------- floor plan drawing ---------- */

@customElement("floor-plan")
class FloorPlan extends LitElement {
  static styles = [shared, css`
    :host { display: block; overflow: hidden; background: #fdfdfd; min-height: 0; }
    svg { display: block; width: 100%; height: 100%; }
    .g { stroke: #c6c6c6; } .gd { stroke: #b8b8b8; }
    .w { stroke: #828282; fill: none; } .wl { stroke: #b5b5b5; fill: #fdfdfd; }
    .ax { stroke: #4a4a4a; stroke-dasharray: 63 16 16 16; } .axl { stroke: #a0a0a0; }
    .k { stroke: #111; fill: none; }
    .clear { fill: #fdfdfd; }
    .cy { stroke: #a4f1ea; stroke-width: 3; }
    .zone { font: 21px/1 "Liberation Sans", sans-serif; fill: #111; text-anchor: middle; }
    .zone.left { text-anchor: start; }
    .note { font: 9px/1 "Liberation Sans", sans-serif; fill: #666; text-anchor: middle; }
    .blue { fill: #3a4f8f; }
    .bl { stroke: #35508f; fill: none; }
    .dot { fill: #7f9bd6; stroke: #5674b4; }
    .soft { stroke: #b9b9b9; fill: none; }
  `];
  render() {
    const vs = [265, 295, 355, 385, 415, 444, 474, 504, 533, 563, 593, 623, 653, 683, 713, 743, 773, 803, 833, 863, 893, 923, 952, 981, 1011];
    const hs = [185, 215, 246, 275, 305, 335, 365, 395, 425, 454, 514, 543, 573, 603, 633, 663];
    const cols = [[314, 338], [368, 392], [447, 472], [527, 552], [606, 631]];
    const v = (x: number, a: number, b: number, c = "g") => svg`<line class=${c} x1=${x + 0.5} x2=${x + 0.5} y1=${a} y2=${b}/>`;
    const h = (y: number, a: number, b: number, c = "g") => svg`<line class=${c} y1=${y + 0.5} y2=${y + 0.5} x1=${a} x2=${b}/>`;
    return html`<svg aria-label="План этажа" role="img"><g transform="translate(-258 -166)">
      ${vs.map((x) => v(x, 160, x < 300 ? 255 : 700))}
      ${v(325, 267, 700)}
      ${hs.map((y) => h(y, y < 250 ? 258 : 321, 1022, "gd"))}
      <rect class="clear" x="258" y="256" width="212" height="9"/><rect class="clear" x="301" y="256" width="20" height="444"/>
      <rect class="clear" x="312" y="160" width="9" height="100"/>
      <rect class="clear" x="461" y="230" width="9" height="35"/><rect class="clear" x="727" y="256" width="295" height="9"/>
      <rect class="clear" x="717" y="160" width="9" height="96"/>
      <path class="w" d="M258 255.500h53.500V160M321.500 160v95.500h139v-26h10v35.500h-149v48M258 276.500h42.500v37"/>
      <path class="w" d="M716.500 160v95M727 160v95.500h288v-30h7M727 265.500h295"/>
      <path class="soft" d="M300.500 314v386M302.500 314v386M321.500 314v386"/>
      ${cols.map(([a, b]) => svg`<rect class="w" x="299.500" y=${a - 0.5} width="22" height=${b - a}/>`)}
      <path class="soft" d="M472 186q42 5 42 43M472 186q22-2 34-19M466 186h-8M432 167q6 7 11 9M443 195q-8 3-11 10M425 218l-2 10M423 227.500h14M453 227.500h62v3h-62M423 230.500h14"/>

      ${[820, 836, 851, 867, 881, 896, 911, 925, 941, 955].map((x) => svg`<line class="soft" stroke-dasharray="13 7" x1=${x + 0.5} x2=${x + 0.5} y1="189" y2="256"/>`)}
      <path d="M806 174h151M820 197h137M820 175v23M957 175v23" stroke="#b0b0b0" stroke-width="2" fill="none" stroke-dasharray="12 4"/>
      <rect class="clear" x="831.500" y="170.500" width="79" height="29" stroke="#555"/>
      <g class="ax">
        ${[316, 465, 721, 781, 1020].map((x) => svg`<line x1=${x + 0.5} x2=${x + 0.5} y1="110" y2="700"/>`)}
        <g class="axl" stroke-width="1.500"><line x1="615" x2="615" y1="110" y2="700"/><line x1="871" x2="871" y1="110" y2="700"/></g>
        <line x1="227" x2="1022" y1="260.500" y2="260.500"/>
      </g>
      <text class="zone" x="870" y="192">04</text>

      <path class="wl" d="M610.500 616V479.500h136v10H620.500V616z"/>
      <path class="wl" d="M846.500 478.500h49v11h-49zM995.500 478.500h30v11h-30zM850 489l5-5M876 489l4-4M868 483l5-5M1004 489l5-5"/>
      <path class="cy" d="M749 484h12M767 484h14M799 484h18M832 484h12M897 484h10M918 484h18M955 484h10M985 484h10M615 617v18M615 650v16"/>
      <line class="ax" x1="227" x2="1022" y1="484.500" y2="484.500"/>
      <line class="ax axl" x1="615" x2="615" y1="552" y2="700"/>

      <g class="k"><g stroke-width="2"><rect x="538" y="380" width="14" height="29"/><rect x="532" y="469" width="14" height="29"/></g>
        <path d="M541.500 380v28M549 380v28M535.500 470v28M543 470v28" stroke-width="1.300"/>
        <rect x="572.500" y="439.500" width="25" height="12"/><rect x="572" y="439" width="26" height="5.500" fill="#000" stroke="none"/>
        <rect x="640.500" y="283.500" width="79" height="29" stroke="#444"/>
        <rect x="1004.500" y="584.500" width="30" height="29" stroke="#333"/></g>
      <text class="zone" x="679" y="266">Зона основная</text>
      <text class="zone" x="679" y="305">23</text>
      <text class="zone left" x="947" y="567">Зона пр</text>
      <circle class="dot" cx="729.500" cy="260.500" r="2.500"/>

      <text class="note" x="694" y="346">Прочее</text><text class="note" x="694" y="360">0 В·А</text>
      <text class="note blue" x="694" y="374">380 В</text><text class="note blue" x="695" y="389">#3</text>
      <text class="note blue" x="708" y="399">550.0</text>
      <text class="note blue" transform="translate(723 348) rotate(-90)">3600.0</text>
      <path d="M692 396h5l-2 4h3l-6 6 1-4h-3z" fill="#444"/>
      <path class="bl" d="M730.500 347v8M741.500 347v8M730 350.500h11M702.500 408v8M713.500 408v8M703 412h10"/>
      <path d="M694.500 405v30M695 403.500h29M727.500 266v173M710 439.500h22M724 436l7 7" stroke="#7f93c4" fill="none"/>
      <circle class="dot" cx="694.500" cy="406.500" r="2.500"/><circle class="dot" cx="721.500" cy="406.500" r="2.500"/><circle class="dot" cx="719" cy="439.500" r="2.500"/>
      <rect x="682.500" y="439.500" width="25" height="12" fill="#fff" stroke="#35508f"/><rect x="682" y="439" width="26" height="6" fill="#3f63b8"/>
      <path d="M689.500 433.500h10v11h-10zM687 434l5-2M697 432l5 2" fill="#fff" stroke="#1e3c8c" stroke-width="1.500"/><path d="M694.500 434v10M690 438.800h9" stroke="#1e3c8c" stroke-width="2"/><circle cx="694.500" cy="438.800" r="2.500" fill="#1e3c8c"/>

      <rect x="998.500" y="167.500" width="21" height="77" rx="3" fill="#f1f1f1" fill-opacity=".85" stroke="#cdcdcd"/>
      <g fill="none" stroke="#bcbcbc"><circle cx="1007.500" cy="187.500" r="5.500"/><circle cx="1007.500" cy="187.500" r="2.500"/><circle cx="1013.500" cy="193.500" r="2.500"/><circle cx="1016" cy="171.500" r="1.800"/><circle cx="1016" cy="239.500" r="1.800"/><path d="M1000 205.500h18"/><circle cx="1012" cy="218" r="2.500"/></g>
      <rect x="1004" y="212" width="7" height="6" fill="#b5d3a6" stroke="#93b783"/>
      <path d="M1008 201h2M1008 229h2" stroke="#888" stroke-width="1.500"/>
    </g></svg>`;
  }
}

/* ---------- drawing window ---------- */

@customElement("view-window")
class ViewWindow extends LitElement {
  static styles = [shared, css`
    :host { display: flex; flex-direction: column; min-width: 0; min-height: 0; background: #ececec; }
    .tabs { display: flex; height: 17px; background: #c9c9c9; flex: none; padding-left: 2px; }
    .tab { display: flex; align-items: center; gap: 5px; width: 203px; padding-left: 1px; color: #555; white-space: nowrap; overflow: hidden; }
    .tab.on { width: 107px; background: #fff; color: #222; font-weight: 700; padding-left: 3px; }
    .tab.on button { margin-left: auto; }
    .more { margin-left: auto; display: flex; align-items: center; width: 18px; }
    .more svg { width: 10px; height: 10px; }
    .mid { flex: 1; display: flex; min-height: 0; padding-left: 2px; }
    floor-plan { flex: 1; min-width: 0; }
    .vbar { width: 12px; margin-right: 4px; display: flex; flex-direction: column; align-items: center; justify-content: space-between; background: #efefef; }
    .vbar svg { width: 9px; height: 16px; }
    .vthumb { width: 12px; height: 12px; background: #c6c6c6; }
    .ctl { display: flex; align-items: center; height: 15px; flex: none; }
    .scale { width: 63px; padding-left: 21px; font-size: 9px; }
    .ctl button { width: 17px; }
    .ctl .i16 { width: 14px; height: 14px; }
    .ctl .end { width: 12px; }
    .end svg { width: 8px; height: 10px; }
    .hbar { flex: 1; display: flex; height: 12px; }
    .hthumb { width: 14px; height: 12px; background: #c6c6c6; margin: auto; }
  `];
  render() {
    const views = ["detail", "style", "sun", "shadow", "crop", "cropShow", "glasses", "reveal", "temp", "analyt", "lockDim"];
    return html`
      <div class="tabs">
        <div class="tab">${sm("sheet")}ЭМ-1.3 - План с групповыми сетя...</div>
        <div class="tab on">${sm("plan")}1 этаж_ЭО<button aria-label="Закрыть вид">${sm("close")}</button></div>
        <button class="more" aria-label="Список видов"><svg viewBox="0 0 10 10"><path d="M1 2.500h8" stroke="#222" stroke-width="1.300"/><path d="M1.500 5h7L5 8.500z" fill="#222"/></svg></button>
      </div>
      <div class="mid">
        <floor-plan></floor-plan>
        <div class="vbar">
          <svg viewBox="0 0 9 16"><path d="M1.500 10l3-3 3 3" fill="none" stroke="#333" stroke-width="1.300"/></svg>
          <span class="vthumb"></span>
          <svg viewBox="0 0 9 16"><path d="M1.500 6l3 3 3-3" fill="none" stroke="#333" stroke-width="1.300"/></svg>
        </div>
      </div>
      <div class="ctl">
        <span class="scale">1 : 100</span>
        ${views.map((n) => html`<button aria-label=${n}>${sm(n)}</button>`)}
        <button class="end" aria-label="Влево"><svg viewBox="0 0 8 10"><path d="M5.500 2l-3 3 3 3" fill="none" stroke="#222" stroke-width="1.300"/></svg></button>
        <div class="hbar"><span class="hthumb"></span></div>
        <button class="end" aria-label="Вправо"><svg viewBox="0 0 8 10"><path d="M2.500 2l3 3-3 3" fill="none" stroke="#222" stroke-width="1.300"/></svg></button>${sm("grip")}
      </div>`;
  }
}

/* ---------- system browser ---------- */

@customElement("system-browser")
class SystemBrowser extends LitElement {
  static styles = [shared, css`
    :host { display: flex; flex-direction: column; background: #fdfdfd; border-left: 2px solid #d6d6d6; min-width: 0; }
    .head { display: flex; align-items: center; justify-content: space-between; height: 17px; padding: 0 3px 0 1px; background: #ececec; border-bottom: 1px solid #ddd; white-space: nowrap; }
    .bar { display: flex; align-items: center; height: 26px; padding-left: 14px; gap: 5px; background: #ececec; }
    .bar select { height: 18px; }
    .a { width: 68px; } .b { width: 93px; margin-right: 6px; }
    .bar button { margin-right: -3px; }
    table { border-collapse: collapse; table-layout: fixed; width: 213px; margin-top: 2px; line-height: 13px; }
    .c1 { width: 133px; } .c2 { width: 40px; }
    th { font-size: 9px; font-weight: 400; text-align: left; height: 15px; padding: 0 3px; border-right: 1px solid #e2e2e2; color: #444; white-space: nowrap; overflow: hidden; }
    td { height: 15px; padding: 0 3px; border: 1px solid #c9c9c9; white-space: nowrap; overflow: hidden; }
    .cell { display: flex; align-items: center; gap: 4px; height: 13px; }
    .cell .i16 { width: 14px; height: 14px; }
    tr.on td { background: #0a36b8; color: #fff; border-color: #0a2a90; }
    .ex { width: 8px; height: 8px; flex: none; }
  `];
  render() {
    return html`
      <div class="head">Диспетчер инженерных систем - Электрика Р...<button aria-label="Закрыть">${sm("close")}</button></div>
      <div class="bar">
        <select class="a" aria-label="Вид"><option>Системы</option></select>
        <select class="b" aria-label="Раздел"><option>Электросети</option></select>
        <button aria-label="Подобрать ширину">${sm("colFit")}</button><button aria-label="Столбцы">${sm("cols")}</button>
      </div>
      <table>
        <colgroup><col class="c1" /><col class="c2" /><col /></colgroup>
        <thead><tr><th>Системы</th><th>Имя п...</th><th>Номе...</th></tr></thead>
        <tbody>
          <tr class="on"><td><div class="cell"><svg class="ex" viewBox="0 0 8 8"><path d="M.5 .5h7v7h-7zM4 2v4M2 4h4" fill="none" stroke="#7d9be6"/></svg>${sm("folderQ")}<span>Не назначено (4 э...</span></div></td><td></td><td></td></tr>
          <tr><td><div class="cell"><svg class="ex" viewBox="0 0 8 8"><path d="M4 0v4h4" fill="none" stroke="#aaa" stroke-dasharray="1 1"/></svg>${sm("folder")}<span>Электросети (Сист...</span></div></td><td></td><td></td></tr>
        </tbody>
      </table>`;
  }
}

/* ---------- status bar ---------- */

@customElement("status-bar")
class StatusBar extends LitElement {
  static styles = [shared, css`
    :host { display: flex; align-items: center; height: 22px; background: #c9c9c9; padding-left: 3px; border-top: 1px solid #dedede; }
    .msg { width: 345px; white-space: nowrap; overflow: hidden; }
    select { height: 16px; background-color: #fbfbfb; border: 0; }
    .sets { width: 171px; margin: 0 4px 0 3px; }
    .req { display: flex; align-items: center; width: 40px; gap: 2px; }
    .opts { width: 170px; color: #8b8b8b; margin: 0 auto 0 4px; }
    .only { display: flex; align-items: center; gap: 3px; }
    input { appearance: none; width: 12px; height: 12px; border: 1px solid #555; background: #f2f5f9; }
    .sel { display: flex; align-items: center; padding: 0 70px 0 7px; gap: 4px; }
    .pair { display: flex; gap: 4px; }
  `];
  render() {
    return html`
      <span class="msg">Рабочий набор1 : Связанные файлы : Связанная модель Revit : Ресторан.r</span>
      ${sm("worksets")}
      <select class="sets" aria-label="Рабочий набор"><option>Силовые щиты</option></select>
      <span class="req">${sm("editReq")}:0</span>
      <span class="pair">${sm("listWin")}${sm("ghostWin")}</span>
      <select class="opts" aria-label="Вариант"><option>Главная модель</option></select>
      <label class="only"><input type="checkbox" />Только редактируемые</label>
      <div class="sel">
        ${["selLink", "selUnder", "selPin", "selFace", "selDrag", "gear"].map((n) => html`<button aria-label=${n}>${sm(n)}</button>`)}
        <button aria-label="Фильтр">${sm("filter")}:1</button>
      </div>`;
  }
}

/* ---------- application ---------- */

@customElement("app-root")
class AppRoot extends LitElement {
  static styles = [shared, css`
    :host { display: grid; position: relative; height: 100vh; overflow: hidden; grid-template-rows: auto auto minmax(0, 1fr) auto; background: #c9c9c9; }
    .work { display: grid; grid-template-columns: 256px minmax(0, 1fr) 242px; min-height: 0; padding-top: 2px; }
    .over { position: absolute; pointer-events: none; }
    .rubezh { left: 38px; top: 40px; width: 260px; height: 64px; opacity: .5; }
    .rubezh text { font: italic 900 40px "Liberation Sans", sans-serif; fill: #6f88a8; stroke: #6f88a8; stroke-width: 1.500px; }
    .vys { right: 8px; top: 36px; width: 142px; color: rgba(110, 110, 110, .6); font: 900 26px/26px Roboto, sans-serif; text-shadow: 1px 1px 2px rgba(120, 120, 120, .4); }
    .vys svg { display: block; width: 62px; height: 50px; margin: 0 0 12px 38px; }
    .vys .sub { display: flex; justify-content: space-between; font: 9px/24px "Liberation Sans", sans-serif; color: #b0b0b0; padding: 0 4px; text-shadow: none; }
    .course { right: 4px; bottom: 26px; text-align: right; font: 700 19px/21px Lato, sans-serif; color: #d6d8d6; }
    .links { left: 258px; bottom: 39px; display: grid; grid-template-columns: 165px auto; font: 700 17px/18px Lato, sans-serif; color: rgba(190, 192, 190, .8); }
    .pointer { left: 209px; bottom: 30px; width: 12px; height: 16px; }
  `];
  render() {
    return html`
      <title-bar></title-bar>
      <ribbon-bar></ribbon-bar>
      <main class="work">
        <properties-palette></properties-palette>
        <view-window></view-window>
        <system-browser></system-browser>
      </main>
      <status-bar></status-bar>
      <svg class="over rubezh" viewBox="0 0 260 64" aria-hidden="true">
        <path d="M16 2h70l-10 27H62l19 33H65L48 49H0zM34 12L22 40h18l6-14h-9l5-14zM52 10l-4 12h14l4-12z" fill="#5f7da5" fill-rule="evenodd"/>
        <text x="83" y="35">RUBEZH</text>
      </svg>
      <div class="over vys">
        <svg viewBox="0 0 64 50" aria-hidden="true"><path d="M0 0h64L32 50z" fill="#cf8b86" fill-opacity=".6"/><path d="M8 3h11l13 26L46 3h11L35 39q-3 4-6 0z" fill="#f2f0ee" fill-opacity=".8"/></svg>
        VYSOTSKIY
        <div class="sub">${[..."CONSULTING"].map((c) => html`<span>${c}</span>`)}</div>
      </div>
      <div class="over course">Видеокурс "Autodesk Revit. Электрика: Продвинутый уровень"<br />Блок "Настройка рабочего файла"<br />Урок "Рабочие наборы"</div>
      <div class="over links"><span>Vysotskiy consulting</span><span>RUBEZH</span><span>www.bim.vc</span><span>www.td.rubezh.ru</span></div>
      <svg class="over pointer" viewBox="0 0 12 16" aria-hidden="true"><path d="M1 1v12l3-2.500L6 15l2-1-2-4.500h4z" fill="#fff" stroke="#222"/></svg>`;
  }
}
